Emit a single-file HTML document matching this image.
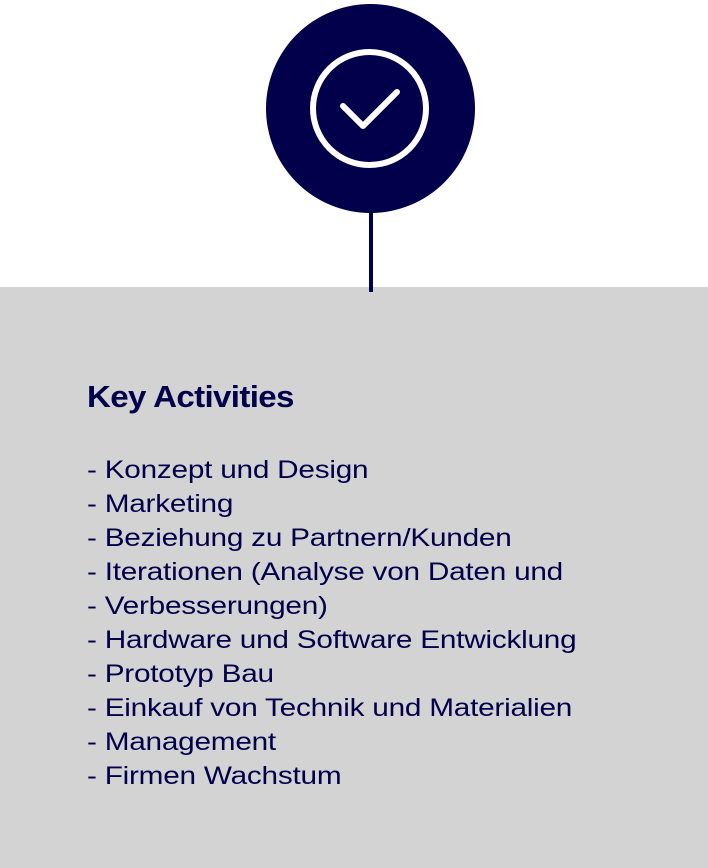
<!DOCTYPE html>
<html><head><meta charset="utf-8"><style>
html,body{margin:0;padding:0;}
body{width:708px;height:868px;position:relative;background:#fff;overflow:hidden;font-family:"Liberation Sans",sans-serif;color:#03004b;}
.gray{position:absolute;left:0;top:287px;width:708px;height:581px;background:#d3d3d3;}
svg{position:absolute;left:0;top:0;}
h1{position:absolute;left:87px;top:379px;margin:0;font-size:31px;font-weight:bold;letter-spacing:-0.6px;line-height:36px;transform:scaleX(1.067);transform-origin:0 0;white-space:nowrap;}
.list{position:absolute;left:87px;top:453px;font-size:25px;line-height:34px;letter-spacing:-0.2px;transform:scaleX(1.19);transform-origin:0 0;white-space:nowrap;}
</style></head><body>
<div class="gray"></div>
<svg width="708" height="300">
<rect x="369" y="205" width="4" height="87" fill="#03004b"/>
<circle cx="370.5" cy="108.5" r="104.5" fill="#03004b"/>
<circle cx="369.5" cy="108.5" r="56.5" fill="none" stroke="#fff" stroke-width="6"/>
<polyline points="343,106 363,126 397,92" fill="none" stroke="#fff" stroke-width="6" stroke-linecap="round" stroke-linejoin="round"/>
</svg>
<h1>Key Activities</h1>
<div class="list">
- Konzept und Design<br>
- Marketing<br>
- Beziehung zu Partnern/Kunden<br>
- Iterationen (Analyse von Daten und<br>
- Verbesserungen)<br>
- Hardware und Software Entwicklung<br>
- Prototyp Bau<br>
- Einkauf von Technik und Materialien<br>
- Management<br>
- Firmen Wachstum
</div>
</body></html>
